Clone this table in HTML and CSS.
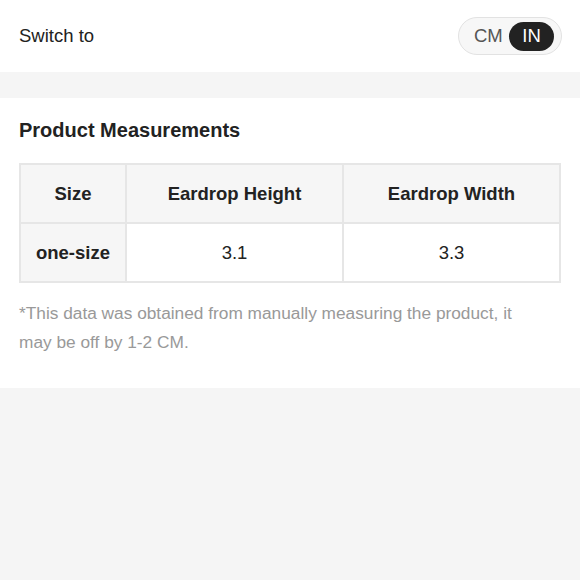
FILE: index.html
```html
<!DOCTYPE html>
<html>
<head>
<meta charset="utf-8">
<link rel="stylesheet" href="styles.css">
</head>
<body>
<div class="switch-row">
  <span class="switch-label">Switch to</span>
  <div class="toggle">
    <span class="opt">CM</span>
    <span class="opt active">IN</span>
  </div>
</div>
<div class="band"></div>
<section class="measure">
  <h2 class="title">Product Measurements</h2>
  <table class="table">
    <thead>
      <tr><th class="c1">Size</th><th class="c2">Eardrop Height</th><th class="c3">Eardrop Width</th></tr>
    </thead>
    <tbody>
      <tr><td class="c1 size">one-size</td><td>3.1</td><td>3.3</td></tr>
    </tbody>
  </table>
  <p class="note">*This data was obtained from manually measuring the product, it may be off by 1-2 CM.</p>
</section>
</body>
</html>
```
FILE: styles.css
```css
html, body { margin: 0; padding: 0; }
body {
  background: #f5f5f5;
  font-family: "Liberation Sans", Arial, sans-serif;
  color: #222;
  width: 580px;
  height: 580px;
  overflow: hidden;
}
.switch-row {
  background: #fff;
  height: 72px;
  display: flex;
  align-items: center;
  justify-content: space-between;
  padding: 0 19px;
  box-sizing: border-box;
}
.switch-label { font-size: 18.5px; color: #222; }
.toggle {
  display: flex;
  align-items: center;
  height: 38px;
  width: 104px;
  box-sizing: border-box;
  border: 1px solid #e2e2e2;
  border-radius: 19px;
  background: #f7f7f7;
  padding: 0 7px 0 15px;
  justify-content: space-between;
  margin-right: -1px;
}
.opt { font-size: 18.5px; color: #555; }
.opt.active {
  background: #222;
  color: #fff;
  height: 29px;
  width: 45px;
  border-radius: 15px;
  display: flex;
  align-items: center;
  justify-content: center;
}
.band { height: 26px; }
.measure {
  background: #fff;
  padding: 21px 19px 26px;
  height: 290px;
  box-sizing: border-box;
}
.title {
  margin: 0;
  font-size: 20px;
  font-weight: bold;
  color: #222;
  line-height: 22px;
}
.table {
  margin-top: 22px;
  width: 542px;
  border-collapse: collapse;
  font-size: 18.5px;
}
.table th, .table td {
  border: 2px solid #e6e6e6;
  text-align: center;
  height: 57px;
  padding: 0;
}
.table th { background: #f6f6f6; font-weight: bold; color: #222; }
.table td { color: #222; }
.table .c1 { width: 104px; }
.table .c2 { width: 215px; }
.table td.size { background: #f6f6f6; font-weight: bold; }
.note {
  margin: 16px 0 0;
  max-width: 515px;
  font-size: 17.3px;
  line-height: 29px;
  color: #999;
}
```
